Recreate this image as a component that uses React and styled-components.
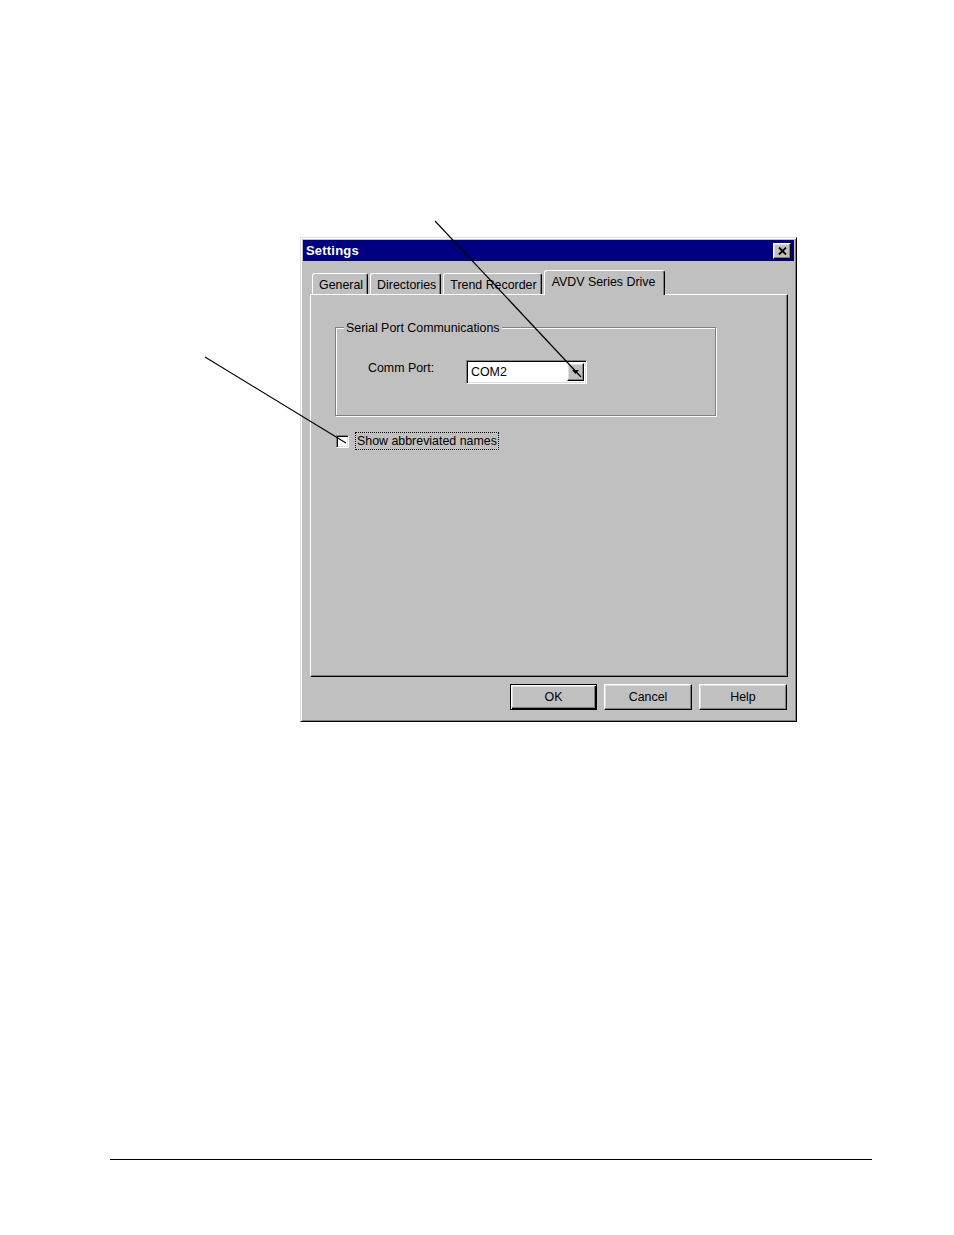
import React from "react";
import styled, { createGlobalStyle, css } from "styled-components";

const GlobalStyle = createGlobalStyle`
  html, body {
    margin: 0;
    padding: 0;
    background: #ffffff;
  }
  body {
    font-family: "Liberation Sans", Arial, sans-serif;
    font-size: 12.4px;
    color: #000;
  }
`;

const gray = "#c0c0c0";

const raised = css`
  border-style: solid;
  border-width: 1px;
  border-color: #ffffff #000000 #000000 #ffffff;
  box-shadow: inset -1px -1px 0 #808080, inset 1px 1px 0 #dfdfdf;
`;

const sunken = css`
  border-style: solid;
  border-width: 1px;
  border-color: #808080 #ffffff #ffffff #808080;
  box-shadow: inset 1px 1px 0 #000000, inset -1px -1px 0 #dfdfdf;
`;

const Page = styled.div`
  position: relative;
  width: 954px;
  height: 1235px;
  overflow: hidden;
`;

const DialogArea = styled.div`
  padding: 237px 0 0 300px;
`;

const Dialog = styled.div`
  box-sizing: border-box;
  width: 497px;
  padding: 2px;
  background: ${gray};
  border-style: solid;
  border-width: 1px;
  border-color: #dfdfdf #000000 #000000 #dfdfdf;
  box-shadow: inset 1px 1px 0 #ffffff, inset -1px -1px 0 #808080;
`;

const TitleBar = styled.div`
  display: flex;
  align-items: center;
  justify-content: space-between;
  height: 21px;
  padding: 0 3px;
  background: #000080;
`;

const Title = styled.span`
  color: #ffffff;
  font-weight: bold;
  font-size: 13px;
  letter-spacing: 0.2px;
`;

const CloseButton = styled.div`
  ${raised};
  box-sizing: border-box;
  display: flex;
  align-items: center;
  justify-content: center;
  width: 18px;
  height: 16px;
  background: ${gray};
`;

const Body = styled.div`
  padding: 9px 6px 9px 7px;
`;

const TabStrip = styled.div`
  display: flex;
  align-items: flex-end;
  gap: 2px;
  height: 24px;
  padding-left: 2px;
`;

const Tab = styled.div`
  position: relative;
  box-sizing: border-box;
  height: ${(p) => (p.$active ? "25px" : "21px")};
  margin-bottom: ${(p) => (p.$active ? "-1px" : "0")};
  padding: ${(p) => (p.$active ? "3px 9px 0 7px" : "3px 4px 0 6px")};
  line-height: 16px;
  background: ${gray};
  border-top: 1px solid #ffffff;
  border-left: 1px solid #ffffff;
  border-right: 1px solid #000000;
  border-radius: 3px 3px 0 0;
  box-shadow: inset -1px 0 0 #808080;
  z-index: ${(p) => (p.$active ? 1 : 0)};
  white-space: nowrap;
`;

const Panel = styled.div`
  box-sizing: border-box;
  height: 383px;
  padding: 32px 0 0 24px;
  border-style: solid;
  border-width: 1px;
  border-color: #ffffff #000000 #000000 #ffffff;
  box-shadow: inset -1px -1px 0 #808080;
`;

const Group = styled.div`
  position: relative;
  box-sizing: border-box;
  width: 381px;
  height: 89px;
  padding: 33px 0 0 32px;
  border: 1px solid #808080;
  box-shadow: inset 1px 1px 0 #ffffff, 1px 1px 0 #ffffff;
`;

const Legend = styled.span`
  position: absolute;
  top: -7px;
  left: 8px;
  padding: 0 2px;
  line-height: 15px;
  background: ${gray};
  white-space: nowrap;
`;

const FieldRow = styled.div`
  display: flex;
  align-items: flex-start;
`;

const FieldLabel = styled.span`
  width: 98px;
  line-height: 15px;
`;

const Combo = styled.div`
  ${sunken};
  box-sizing: border-box;
  display: flex;
  align-items: center;
  justify-content: space-between;
  width: 121px;
  height: 24px;
  margin-top: -1px;
  padding: 2px 2px 2px 4px;
  background: #ffffff;
`;

const ComboValue = styled.span`
  line-height: 16px;
`;

const DropButton = styled.div`
  ${raised};
  box-sizing: border-box;
  display: flex;
  align-items: center;
  justify-content: center;
  width: 17px;
  height: 18px;
  background: ${gray};
`;

const CheckRow = styled.div`
  display: flex;
  align-items: center;
  margin: 16px 0 0 1px;
`;

const CheckBox = styled.div`
  ${sunken};
  box-sizing: border-box;
  width: 13px;
  height: 13px;
  background: #ffffff;
`;

const CheckLabel = styled.span`
  margin-left: 6px;
  padding: 0 1px;
  line-height: 16px;
  border: 1px dotted #000000;
`;

const ButtonRow = styled.div`
  display: flex;
  justify-content: flex-end;
  gap: 7px;
  margin-top: 7px;
  padding-right: 1px;
`;

const Button = styled.div`
  box-sizing: border-box;
  display: flex;
  align-items: center;
  justify-content: center;
  width: ${(p) => p.$width}px;
  height: 26px;
  background: ${gray};
  ${(p) =>
    p.$default
      ? css`
          border: 1px solid #000000;
          box-shadow: inset 1px 1px 0 #ffffff, inset -1px -1px 0 #000000,
            inset -2px -2px 0 #808080, inset 2px 2px 0 #dfdfdf;
        `
      : raised};
`;

const Rule = styled.div`
  width: 762px;
  height: 1px;
  margin: 437px 0 0 110px;
  background: #000000;
`;

const Callouts = styled.svg`
  position: absolute;
  top: 0;
  left: 0;
  pointer-events: none;
`;

const tabs = ["General", "Directories", "Trend Recorder", "AVDV Series Drive"];

const CloseIcon = () => (
  <svg width="9" height="8" viewBox="0 0 9 8">
    <path d="M1 0.5 L8 7.5 M8 0.5 L1 7.5" stroke="#000" strokeWidth="1.8" />
  </svg>
);

const DownArrow = () => (
  <svg width="7" height="4" viewBox="0 0 7 4">
    <path d="M0 0 H7 L3.5 4 Z" fill="#000" />
  </svg>
);

export default function App() {
  return (
    <Page>
      <GlobalStyle />
      <DialogArea>
        <Dialog>
          <TitleBar>
            <Title>Settings</Title>
            <CloseButton>
              <CloseIcon />
            </CloseButton>
          </TitleBar>
          <Body>
            <TabStrip>
              {tabs.map((t, i) => (
                <Tab key={t} $active={i === tabs.length - 1}>
                  {t}
                </Tab>
              ))}
            </TabStrip>
            <Panel>
              <Group>
                <Legend>Serial Port Communications</Legend>
                <FieldRow>
                  <FieldLabel>Comm Port:</FieldLabel>
                  <Combo>
                    <ComboValue>COM2</ComboValue>
                    <DropButton>
                      <DownArrow />
                    </DropButton>
                  </Combo>
                </FieldRow>
              </Group>
              <CheckRow>
                <CheckBox />
                <CheckLabel>Show abbreviated names</CheckLabel>
              </CheckRow>
            </Panel>
            <ButtonRow>
              <Button $width={87} $default>OK</Button>
              <Button $width={88}>Cancel</Button>
              <Button $width={88}>Help</Button>
            </ButtonRow>
          </Body>
        </Dialog>
      </DialogArea>
      <Rule />
      <Callouts width="954" height="1235" viewBox="0 0 954 1235">
        <line x1="435" y1="221" x2="581" y2="377" stroke="#000" strokeWidth="1.2" />
        <line x1="205" y1="357" x2="346" y2="443" stroke="#000" strokeWidth="1.2" />
      </Callouts>
    </Page>
  );
}
